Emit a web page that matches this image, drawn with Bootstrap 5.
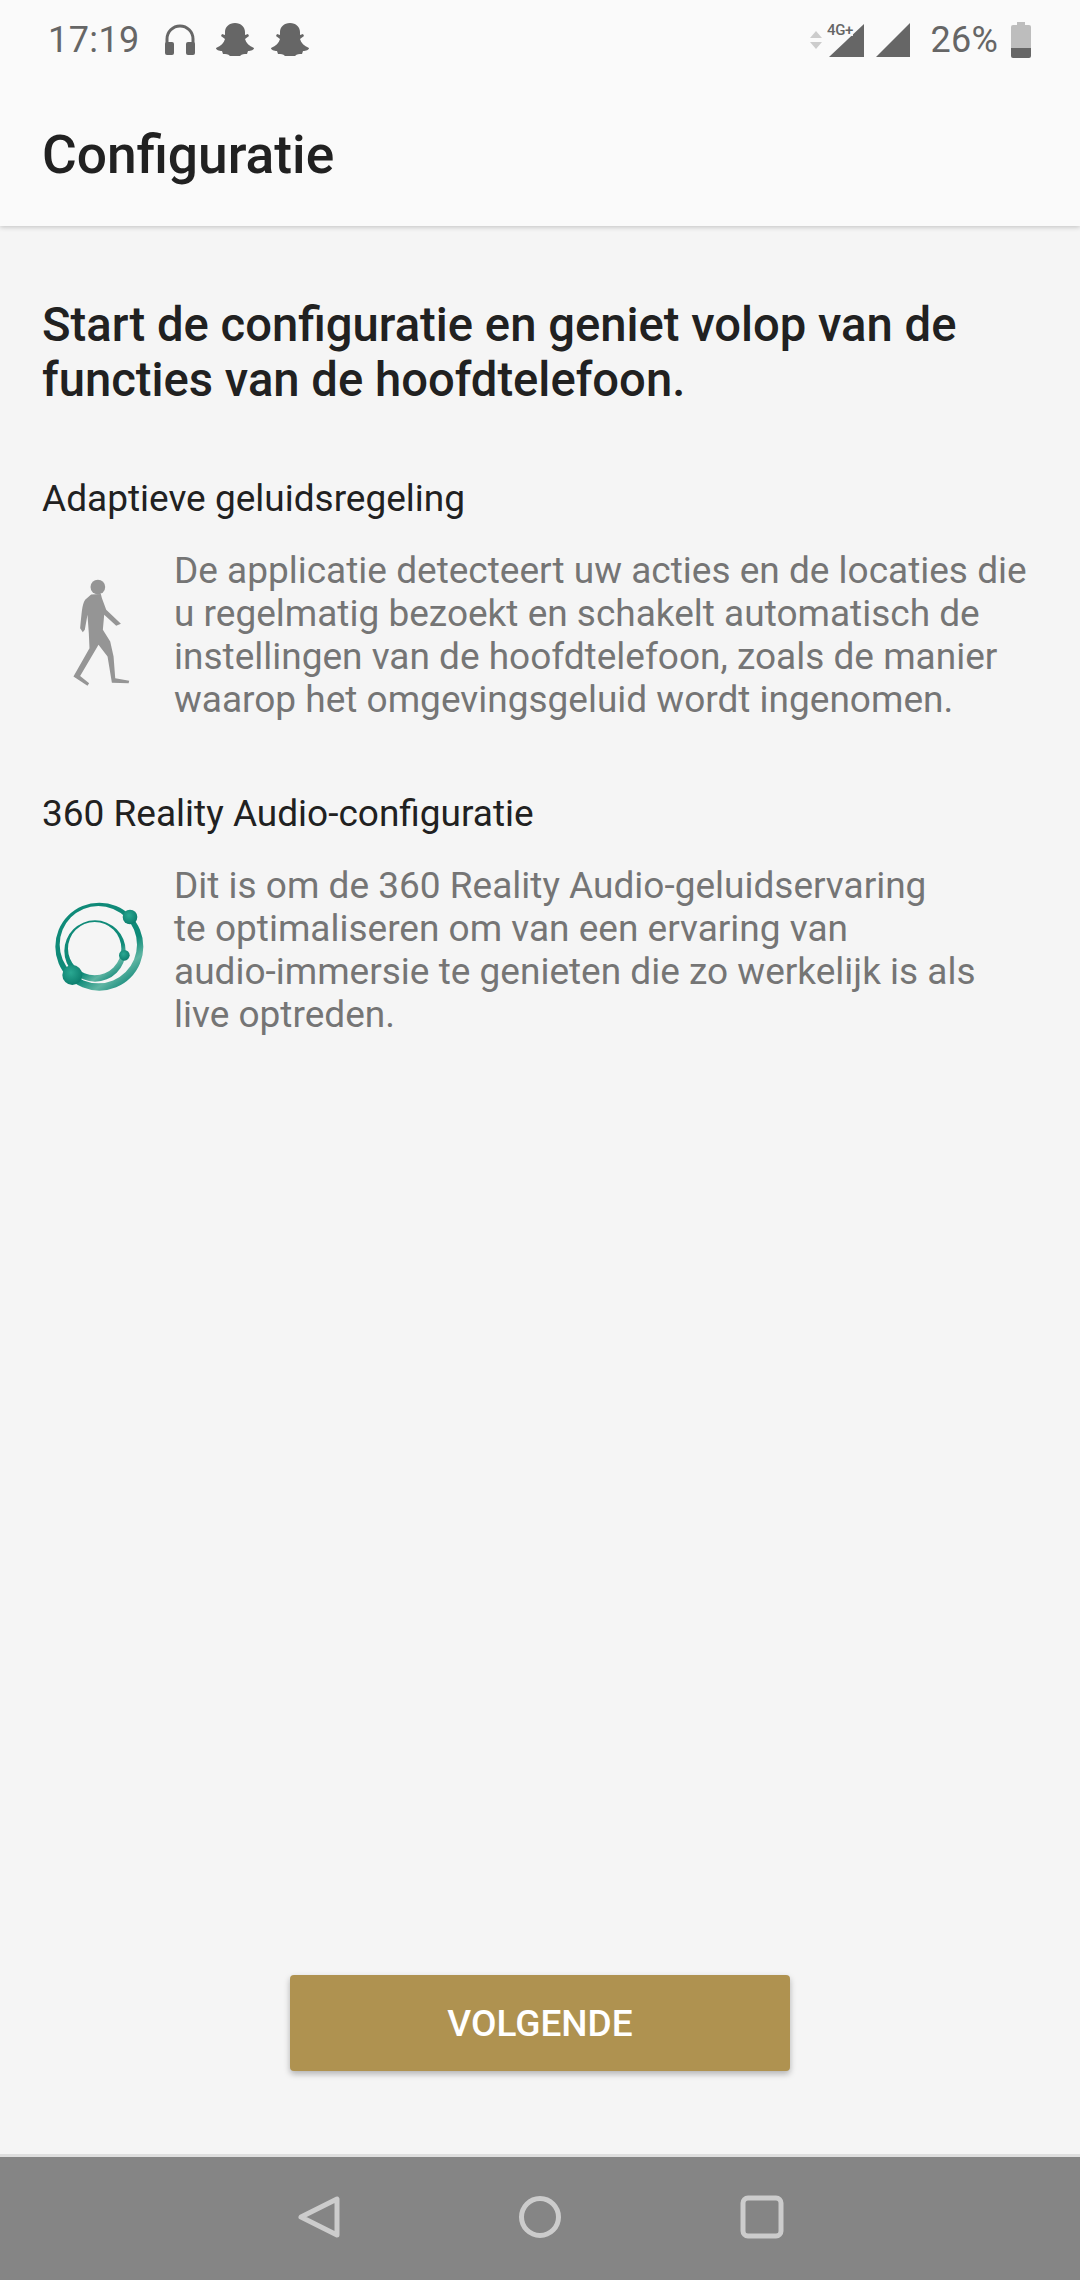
<!DOCTYPE html>
<html lang="nl">
<head>
    <meta charset="UTF-8">
    <meta name="viewport" content="width=device-width, initial-scale=1.0">
    <title>Configuratie</title>
    <link href="https://cdn.jsdelivr.net/npm/bootstrap@5.3.0/dist/css/bootstrap.min.css" rel="stylesheet">
    <style>
        body {
            width: 1080px;
            height: 2280px;
            background: #f5f5f5;
            font-family: Roboto, "Liberation Sans", sans-serif;
            overflow: hidden;
        }
        .top-area { background: #fafafa; box-shadow: 0 1px 5px rgba(0, 0, 0, .22); height: 226px; position: relative; }
        .status-bar { height: 80px; padding: 0 49px 0 48px; color: #666; font-size: 36px; }
        .status-time { width: 90px; letter-spacing: .4px; margin-right: 26px; }
        .status-percent { margin-left: 20px; margin-right: 13px; letter-spacing: .2px; }
        .gap-phones { margin-right: 20px; }
        .gap-ghost { margin-right: 17px; }
        .gap-signal { margin-right: 10px; }
        .app-title { font-size: 53.3px; font-weight: 500; color: #212121; padding-left: 42px; margin: 0; line-height: 151px; }
        .page-body { padding: 72px 42px 0; }
        .intro-title { font-size: 47.2px; line-height: 55px; font-weight: 500; color: #212121; margin: 0 0 69px; }
        .feature-title { font-size: 37px; line-height: 44px; color: #212121; margin: 0 0 28px; }
        .feature-text { font-size: 37px; line-height: 43px; color: #757575; margin: 0; }
        .feature-row { margin-bottom: 71px; }
        .icon-col { width: 132px; flex: none; padding-left: 8px; }
        .next-btn { width: 500px; height: 96px; background: #af9250; color: #fff; border: 0; border-radius: 4px; font-size: 37px; font-weight: 500; box-shadow: 0 3px 6px rgba(0, 0, 0, .28); margin-bottom: 83px; padding: 2px 0 0; }
        .next-btn:hover { background: #af9250; color: #fff; }
        .nav-strip { height: 126px; background: #858585; border-top: 3px solid #dedede; padding-bottom: 3px; }
        .nav-slot { width: 222px; }
    </style>
</head>
<body class="d-flex flex-column">
    <div class="top-area flex-shrink-0">
        <div class="status-bar d-flex align-items-center">
            <span class="status-time">17:19</span>
            <svg width="32" height="32" viewBox="0 0 32 32" class="gap-phones"><path d="M3 28V15a13 13 0 0 1 26 0v13" fill="none" stroke="#666" stroke-width="3"/><rect x="1" y="18" width="9" height="13" rx="2" fill="#666"/><rect x="22" y="18" width="9" height="13" rx="2" fill="#666"/></svg>
            <svg width="38" height="36" viewBox="0 0 38 36" class="gap-ghost"><path d="M19 1c6 0 10 4 10 9v3l3-1 1 2-4 3c1 4 4 7 9 9 0 2-3 3-6 3l-1 3c-3 0-5 0-7 2h-10c-2-2-4-2-7-2l-1-3c-3 0-6-1-6-3 5-2 8-5 9-9l-4-3 1-2 3 1v-3c0-5 4-9 10-9z" fill="#666"/></svg>
            <svg width="38" height="36" viewBox="0 0 38 36"><path d="M19 1c6 0 10 4 10 9v3l3-1 1 2-4 3c1 4 4 7 9 9 0 2-3 3-6 3l-1 3c-3 0-5 0-7 2h-10c-2-2-4-2-7-2l-1-3c-3 0-6-1-6-3 5-2 8-5 9-9l-4-3 1-2 3 1v-3c0-5 4-9 10-9z" fill="#666"/></svg>
            <div class="ms-auto d-flex align-items-center">
                <svg width="14" height="18" viewBox="0 0 14 18" class="me-1"><path d="M7 0l6 7H1zM1 11h12l-6 7z" fill="#ccc"/></svg>
                <svg width="38" height="36" viewBox="0 0 38 36" class="gap-signal"><path d="M37 2v33H2z" fill="#666"/><path d="M0 0h26v14H0z" fill="#fafafa" opacity=".9"/><text x="0" y="13" font-size="15" font-weight="500" letter-spacing="-.4" fill="#666" font-family="Roboto, sans-serif">4G+</text></svg>
                <svg width="36" height="36" viewBox="0 0 36 36"><path d="M35 1v34H1z" fill="#666"/></svg>
                <span class="status-percent">26%</span>
                <svg width="20" height="36" viewBox="0 0 20 36"><path d="M6 0h8v3h4a2 2 0 0 1 2 2v21H0V5a2 2 0 0 1 2-2h4z" fill="#bdbdbd"/><path d="M0 26h20v8a2 2 0 0 1-2 2H2a2 2 0 0 1-2-2z" fill="#666"/></svg>
            </div>
        </div>
        <h1 class="app-title">Configuratie</h1>
    </div>

    <main class="page-body flex-grow-1">
        <h2 class="intro-title">Start de configuratie en geniet volop van de<br>functies van de hoofdtelefoon.</h2>

        <h3 class="feature-title fw-normal">Adaptieve geluidsregeling</h3>
        <div class="feature-row d-flex align-items-center">
            <div class="icon-col">
                <svg width="87" height="117" viewBox="60 82 260 350">
                    <circle cx="203" cy="112" r="22" fill="#959595"/>
                    <path d="M183 134L165 150C155 165 155 190 150 235L158 247L164 240L172 195L176 250L178 295L130 380L172 407L177 400L150 378L205 285L232 320L245 398L295 400L297 392L255 385L250 320L240 275L218 240L222 195L258 228L272 222L228 180L215 145L212 133Z" fill="#959595"/>
                </svg>
            </div>
            <p class="feature-text">De applicatie detecteert uw acties en de locaties die<br>u regelmatig bezoekt en schakelt automatisch de<br>instellingen van de hoofdtelefoon, zoals de manier<br>waarop het omgevingsgeluid wordt ingenomen.</p>
        </div>

        <h3 class="feature-title fw-normal">360 Reality Audio-configuratie</h3>
        <div class="feature-row d-flex align-items-center">
            <div class="icon-col">
                <svg width="100" height="100" viewBox="60 62 300 300">
                    <defs>
                        <linearGradient id="ringFill" x1="0" y1="0" x2="0.75" y2="1">
                            <stop offset="0" stop-color="#0f8a78"/>
                            <stop offset=".7" stop-color="#0f8a78"/>
                            <stop offset=".85" stop-color="#5fb5a3"/>
                            <stop offset="1" stop-color="#14897a"/>
                        </linearGradient>
                        <radialGradient id="ballFill" cx=".42" cy=".38" r=".65">
                            <stop offset="0" stop-color="#2aa892"/>
                            <stop offset="1" stop-color="#0b7c6c"/>
                        </radialGradient>
                    </defs>
                    <path fill-rule="evenodd" fill="url(#ringFill)" d="M76 202a132 132 0 1 0 264 0a132 132 0 1 0-264 0zM89 196a116 116 0 1 0 232 0a116 116 0 1 0-232 0z"/>
                    <path fill-rule="evenodd" fill="url(#ringFill)" d="M103 215a92 92 0 1 0 184 0a92 92 0 1 0-184 0zM114 208a80 80 0 1 0 160 0a80 80 0 1 0-160 0z"/>
                    <circle cx="300" cy="113" r="22" fill="url(#ballFill)"/>
                    <circle cx="283" cy="228" r="16" fill="url(#ballFill)"/>
                    <circle cx="127" cy="287" r="30" fill="url(#ballFill)"/>
                </svg>
            </div>
            <p class="feature-text">Dit is om de 360 Reality Audio-geluidservaring<br>te optimaliseren om van een ervaring van<br>audio-immersie te genieten die zo werkelijk is als<br>live optreden.</p>
        </div>
    </main>

    <div class="d-flex justify-content-center flex-shrink-0">
        <button class="next-btn btn" type="button">VOLGENDE</button>
    </div>

    <div class="nav-strip d-flex justify-content-center align-items-center flex-shrink-0">
        <div class="nav-slot text-center"><svg width="44" height="44" viewBox="0 0 44 44"><path d="M41 4v36L5 22z" fill="none" stroke="#ccc" stroke-width="5" stroke-linejoin="round"/></svg></div>
        <div class="nav-slot text-center"><svg width="44" height="44" viewBox="0 0 44 44"><circle cx="22" cy="22" r="18.5" fill="none" stroke="#ccc" stroke-width="5"/></svg></div>
        <div class="nav-slot text-center"><svg width="44" height="44" viewBox="0 0 44 44"><rect x="3" y="3" width="38" height="38" rx="5" fill="none" stroke="#ccc" stroke-width="5"/></svg></div>
    </div>
    <script src="https://cdn.jsdelivr.net/npm/bootstrap@5.3.0/dist/js/bootstrap.bundle.min.js"></script>
</body>
</html>
